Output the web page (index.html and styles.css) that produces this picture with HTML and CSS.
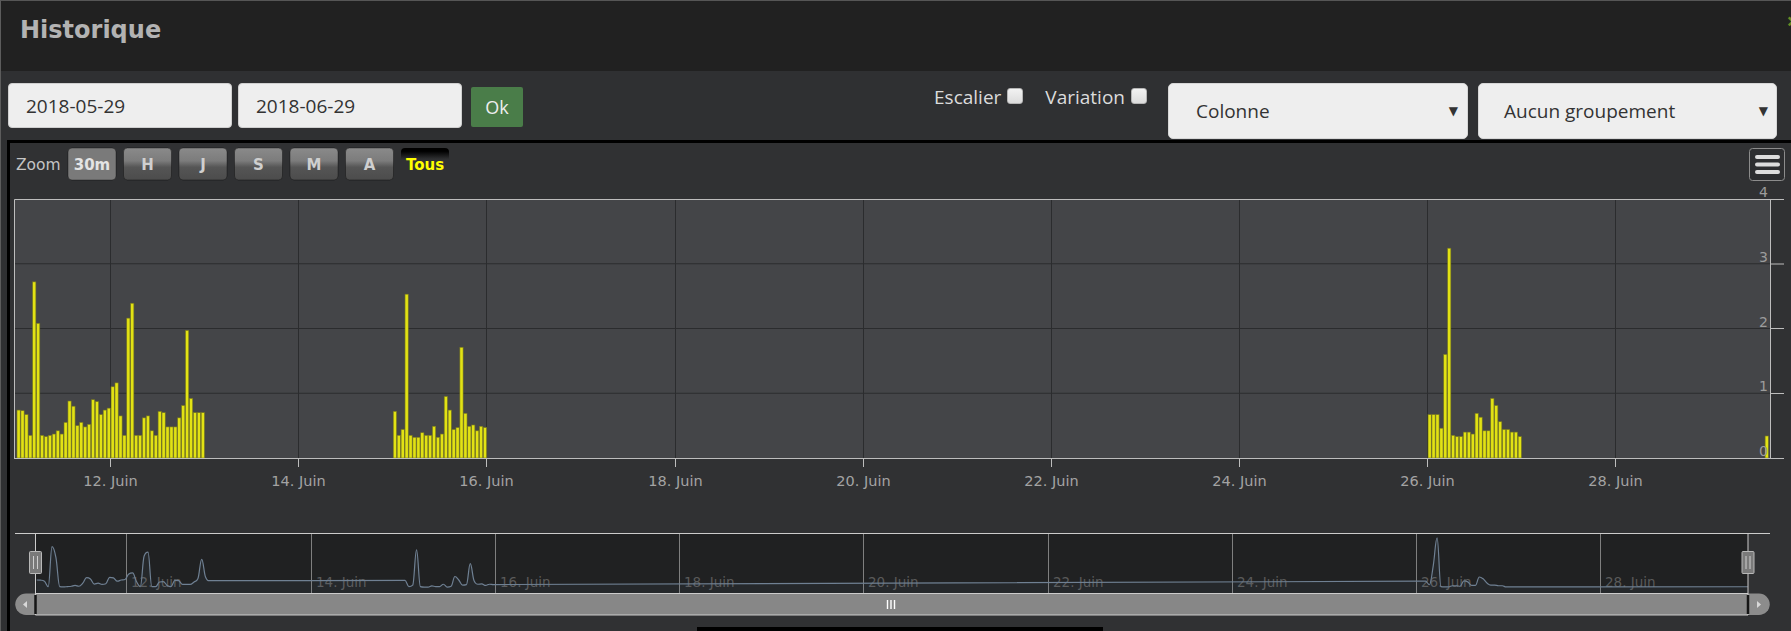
FILE: index.html
```html
<!DOCTYPE html>
<html lang="fr">
<head>
<meta charset="utf-8">
<title>Historique</title>
<link rel="stylesheet" href="styles.css">
</head>
<body>
<div class="modal">
  <div class="modal-header">
    <h4 class="modal-title">Historique</h4>
    <span class="modal-close">×</span>
  </div>
  <div class="toolbar">
    <input class="date-input" type="text" value="2018-05-29">
    <input class="date-input date-input--second" type="text" value="2018-06-29">
    <button class="btn-ok" type="button">Ok</button>
    <div class="options">
      <label class="opt">Escalier<input class="check" type="checkbox"></label>
      <label class="opt opt--variation">Variation<input class="check" type="checkbox"></label>
    </div>
    <div class="select select--type"><span>Colonne</span><span class="caret">▼</span></div>
    <div class="select select--group"><span>Aucun groupement</span><span class="caret">▼</span></div>
  </div>
  <div class="chart-box">
    <svg class="chart" viewBox="10 143 1781 488" xmlns="http://www.w3.org/2000/svg">
      <defs>
        <linearGradient id="btnGrad" x1="0" y1="0" x2="0" y2="1">
          <stop offset="0" stop-color="#8a8a8a"/>
          <stop offset="0.4" stop-color="#7c7c7c"/>
          <stop offset="0.6" stop-color="#555555"/>
          <stop offset="1" stop-color="#4c4c4c"/>
        </linearGradient>
        <linearGradient id="selGrad" x1="0" y1="0" x2="0" y2="1">
          <stop offset="0.1" stop-color="#000000"/>
          <stop offset="0.35" stop-color="#303133"/>
        </linearGradient>
        <clipPath id="plotClip"><rect x="14" y="199" width="1756" height="259"/></clipPath>
        <clipPath id="navClip"><rect x="35.5" y="533" width="1712.5" height="60"/></clipPath>
      </defs>

      <!-- range selector -->
      <text class="rs-label" x="16" y="170">Zoom</text>
      <g class="rs-btn rs-btn--disabled">
        <rect x="68" y="148" width="48" height="32" rx="4"/>
        <text x="92" y="169.5">30m</text>
      </g>
      <g class="rs-btn">
        <rect x="123.5" y="148" width="48" height="32" rx="4"/>
        <text x="147.5" y="169.5">H</text>
      </g>
      <g class="rs-btn">
        <rect x="179" y="148" width="48" height="32" rx="4"/>
        <text x="203" y="169.5">J</text>
      </g>
      <g class="rs-btn">
        <rect x="234.5" y="148" width="48" height="32" rx="4"/>
        <text x="258.5" y="169.5">S</text>
      </g>
      <g class="rs-btn">
        <rect x="290" y="148" width="48" height="32" rx="4"/>
        <text x="314" y="169.5">M</text>
      </g>
      <g class="rs-btn">
        <rect x="345.5" y="148" width="48" height="32" rx="4"/>
        <text x="369.5" y="169.5">A</text>
      </g>
      <g class="rs-btn rs-btn--selected">
        <rect x="401" y="148" width="48" height="32" rx="4"/>
        <text x="425" y="169.5">Tous</text>
      </g>

      <!-- context menu button -->
      <rect class="menu-btn" x="1749.5" y="148.5" width="35" height="32" rx="3"/>
      <path class="menu-lines" d="M1757 157 H1778 M1757 164.5 H1778 M1757 172 H1778"/>

      <!-- plot -->
      <rect class="plot-bg" x="14" y="199" width="1756" height="259"/>
      <path class="grid" d="M14 263.75 H1770 M14 328.5 H1770 M14 393.25 H1770"/>
      <path class="grid" d="M110.5 199 V458 M298.5 199 V458 M486.5 199 V458 M675.5 199 V458 M863.5 199 V458 M1051.5 199 V458 M1239.5 199 V458 M1427.5 199 V458 M1615.5 199 V458"/>
      <g id="bars" clip-path="url(#plotClip)"></g>
      <path class="axis" d="M14.5 458 V199.5 H1770.5 V458.5 H14"/>
      <path class="axis" d="M1770 199.5 H1784 M1770 264 H1784 M1770 328.5 H1784 M1770 393.5 H1784 M1770 458.5 H1784"/>
      <path class="axis" d="M110.5 458 V467 M298.5 458 V467 M486.5 458 V467 M675.5 458 V467 M863.5 458 V467 M1051.5 458 V467 M1239.5 458 V467 M1427.5 458 V467 M1615.5 458 V467"/>
      <g class="x-labels">
        <text x="110.5" y="486">12. Juin</text>
        <text x="298.5" y="486">14. Juin</text>
        <text x="486.5" y="486">16. Juin</text>
        <text x="675.5" y="486">18. Juin</text>
        <text x="863.5" y="486">20. Juin</text>
        <text x="1051.5" y="486">22. Juin</text>
        <text x="1239.5" y="486">24. Juin</text>
        <text x="1427.5" y="486">26. Juin</text>
        <text x="1615.5" y="486">28. Juin</text>
      </g>
      <g class="y-labels">
        <text x="1768" y="197">4</text>
        <text x="1768" y="262">3</text>
        <text x="1768" y="326.5">2</text>
        <text x="1768" y="391">1</text>
        <text x="1768" y="456">0</text>
      </g>

      <!-- navigator -->
      <rect class="nav-bg" x="35.5" y="533" width="1712.5" height="60"/>
      <path class="nav-grid" d="M126.5 533 V593 M311.5 533 V593 M495.5 533 V593 M679.5 533 V593 M863.5 533 V593 M1048.5 533 V593 M1232.5 533 V593 M1416.5 533 V593 M1600.5 533 V593"/>
      <g class="nav-labels">
        <text x="131" y="587">12. Juin</text>
        <text x="316" y="587">14. Juin</text>
        <text x="500" y="587">16. Juin</text>
        <text x="684" y="587">18. Juin</text>
        <text x="868" y="587">20. Juin</text>
        <text x="1053" y="587">22. Juin</text>
        <text x="1237" y="587">24. Juin</text>
        <text x="1421" y="587">26. Juin</text>
        <text x="1605" y="587">28. Juin</text>
      </g>
      <g clip-path="url(#navClip)">
        <path id="nav-area" class="nav-area" d=""/>
        <path id="nav-line" class="nav-line" d=""/>
      </g>

      <!-- scrollbar -->
      <rect class="sb-bar" x="35.5" y="593.5" width="1712.5" height="21.5"/>
      <path class="sb-btn" d="M35.5 593.5 H26 A10.75 10.75 0 0 0 26 615 H35.5 Z"/>
      <path class="sb-btn" d="M1748 593.5 H1759 A10.75 10.75 0 0 1 1759 615 H1748 Z"/>
      <path class="sb-arrow" d="M27 601 L23 604.5 L27 608 Z"/>
      <path class="sb-arrow" d="M1757 601 L1761 604.5 L1757 608 Z"/>
      <path class="sb-rifle" d="M887.5 600 V609 M891 600 V609 M894.5 600 V609"/>
      <path class="nav-outline" d="M15 533.5 H1770 M35.5 593.5 H1748 M35.5 615 H1748"/>
      <path class="nav-outline" d="M35.5 533.5 V615 M1748 533.5 V615"/>
      <path class="sb-mark" d="M35.5 595 V614 M1748 595 V614"/>

      <!-- handles -->
      <rect class="handle" x="29.5" y="551.5" width="12" height="22" rx="1"/>
      <path class="handle-grip" d="M33.5 556 V569 M37.5 556 V569"/>
      <rect class="handle" x="1742" y="551.5" width="12" height="22" rx="1"/>
      <path class="handle-grip" d="M1746 556 V569 M1750 556 V569"/>

      <rect class="bottom-bar" x="697" y="627" width="406" height="4"/>
    </svg>
  </div>
</div>
<script src="script.js"></script>
</body>
</html>
```

FILE: styles.css
```css
html, body {
  margin: 0;
  padding: 0;
  background: #2f3032;
}

body {
  font-family: "Open Sans", "DejaVu Sans", sans-serif;
}

.modal {
  width: 1791px;
  height: 631px;
  box-sizing: border-box;
  border-top: 1px solid #565656;
  border-left: 1px solid #5c5c5c;
  background: #2f3032;
  overflow: hidden;
}

.modal-header {
  position: relative;
  height: 70px;
  background: #212121;
}

.modal-title {
  margin: 0;
  padding-left: 19px;
  font-family: "DejaVu Sans", "Open Sans", sans-serif;
  font-size: 24px;
  font-weight: 700;
  line-height: 58px;
  color: #b3b3b3;
}

.modal-close {
  position: absolute;
  top: 6px;
  right: -8px;
  font-size: 22px;
  font-weight: 700;
  line-height: 26px;
  color: #6d8a24;
}

.toolbar {
  display: flex;
  align-items: flex-start;
  height: 69px;
  box-sizing: border-box;
  padding: 12px 14px 0 7px;
}

.date-input {
  width: 224px;
  height: 45px;
  box-sizing: border-box;
  margin: 0;
  padding: 0 0 0 17px;
  border: 1px solid #cfcfcf;
  border-radius: 4px;
  background: #eeeeee;
  font-family: "Open Sans", sans-serif;
  font-size: 19px;
  color: #333333;
  outline: none;
}

.date-input--second {
  margin-left: 6px;
}

.btn-ok {
  margin: 4px 0 0 9px;
  width: 52px;
  height: 40px;
  padding: 0;
  border: none;
  border-radius: 2px;
  background: #4a7d49;
  font-family: "Open Sans", sans-serif;
  font-size: 18px;
  color: #eeeeee;
}

.options {
  margin-left: auto;
  margin-top: 1px;
  display: flex;
  align-items: flex-start;
  font-size: 19px;
  line-height: 26px;
  color: #dcdcdc;
}

.opt {
  display: flex;
  align-items: flex-start;
}

.opt--variation {
  margin-left: 22px;
}

.check {
  appearance: none;
  -webkit-appearance: none;
  margin: 4px 0 0 6px;
  width: 16px;
  height: 16px;
  box-sizing: border-box;
  border: 1px solid #b5b5b5;
  border-radius: 3px;
  background: linear-gradient(#f2f2f2, #dcdcdc);
}

.select {
  margin-left: 21px;
  width: 300px;
  height: 56px;
  box-sizing: border-box;
  padding: 0 9px 0 27px;
  display: flex;
  align-items: center;
  border: 1px solid #d6d6d6;
  border-radius: 5px;
  background: #eeeeee;
  font-size: 19px;
  color: #333333;
}

.select--group {
  margin-left: 10px;
  width: 299px;
  padding-left: 25px;
  padding-right: 8px;
}

.caret {
  margin-left: auto;
  font-family: "DejaVu Sans", sans-serif;
  font-size: 12px;
  color: #333333;
}

.chart-box {
  margin-left: 6px;
  height: 488px;
  border-top: 3px solid #000000;
  border-left: 3px solid #000000;
  background: #303133;
}

.chart {
  display: block;
  width: 1781px;
  height: 488px;
  font-family: "DejaVu Sans", sans-serif;
}

.rs-label {
  font-size: 15.5px;
  fill: #c4c4c4;
}

.rs-btn rect {
  fill: url(#btnGrad);
  stroke: rgba(0, 0, 0, 0.35);
  stroke-width: 1;
}

.rs-btn text {
  font-size: 15px;
  font-weight: 700;
  fill: #cfcfcf;
  text-anchor: middle;
}

.rs-btn--disabled rect {
  fill: #7a7a7a;
}

.rs-btn--disabled text {
  fill: #e4e4e4;
}

.rs-btn--selected rect {
  fill: url(#selGrad);
  stroke: none;
}

.rs-btn--selected text {
  fill: #ffff00;
}

.menu-btn {
  fill: #2d2e30;
  stroke: #8c8c8c;
  stroke-width: 1;
}

.menu-lines {
  stroke: #dddddd;
  stroke-width: 4;
  stroke-linecap: round;
  fill: none;
}

.plot-bg {
  fill: #444548;
}

.grid {
  stroke: #2b2c2e;
  stroke-width: 1;
  fill: none;
}

.bar {
  fill: #e2e214;
  stroke: #77771f;
  stroke-width: 0.6;
}

.axis {
  stroke: #bdbdbd;
  stroke-width: 1;
  fill: none;
}

.x-labels text {
  font-size: 14.5px;
  fill: #a3a3a3;
  text-anchor: middle;
}

.y-labels text {
  font-size: 14px;
  fill: #9c9c9c;
  text-anchor: end;
}

.nav-bg {
  fill: #202122;
}

.nav-grid {
  stroke: #7f7f7f;
  stroke-width: 1;
  fill: none;
}

.nav-labels text {
  font-size: 13.5px;
  fill: #5a5a5a;
}

.nav-area {
  fill: rgba(119, 152, 191, 0.06);
  stroke: none;
}

.nav-line {
  fill: none;
  stroke: #6f8093;
  stroke-width: 1.2;
}

.sb-bar {
  fill: #878787;
}

.sb-btn {
  fill: #8c8c8c;
}

.sb-arrow {
  fill: #d8d8d8;
}

.sb-rifle {
  stroke: #ffffff;
  stroke-width: 1.4;
  fill: none;
}

.nav-outline {
  stroke: #cccccc;
  stroke-width: 1;
  fill: none;
}

.sb-mark {
  stroke: #151515;
  stroke-width: 2.5;
  fill: none;
}

.handle {
  fill: #7a7a7a;
  stroke: #b8b8b8;
  stroke-width: 1;
}

.handle-grip {
  stroke: #cfcfcf;
  stroke-width: 1;
  fill: none;
}

.bottom-bar {
  fill: #000000;
}
```

FILE: script.js
```js
(function () {
  var NS = 'http://www.w3.org/2000/svg';

  var g1 = [0.74, 0.73, 0.67, 0.35, 2.72, 2.08, 0.35, 0.33, 0.35, 0.37,
            0.42, 0.37, 0.55, 0.88, 0.80, 0.50, 0.55, 0.48, 0.52, 0.90,
            0.87, 0.67, 0.74, 0.77, 1.10, 1.16, 0.65, 0.35, 2.16, 2.39,
            0.35, 0.35, 0.62, 0.65, 0.42, 0.35, 0.72, 0.70, 0.48, 0.48,
            0.48, 0.62, 0.81, 1.97, 0.92, 0.70, 0.70, 0.70];
  var g2 = [0.72, 0.35, 0.44, 2.53, 0.35, 0.32, 0.32, 0.39, 0.35, 0.35,
            0.49, 0.32, 0.37, 0.95, 0.74, 0.44, 0.47, 1.71, 0.69, 0.49,
            0.51, 0.42, 0.49, 0.47];
  var g3 = [0.67, 0.67, 0.67, 0.46, 1.60, 3.24, 0.35, 0.33, 0.33, 0.40,
            0.40, 0.37, 0.69, 0.63, 0.42, 0.42, 0.92, 0.81, 0.56, 0.44,
            0.44, 0.40, 0.40, 0.33];

  var pts = [];
  g1.forEach(function (v, h) { pts.push({ d: 11 + (h + 0.5) / 24, v: v }); });
  g2.forEach(function (v, h) { pts.push({ d: 15 + (h + 0.5) / 24, v: v }); });
  g3.forEach(function (v, h) { pts.push({ d: 26 + (h + 0.5) / 24, v: v }); });
  pts.push({ d: 29 + 14.5 / 24, v: 0.34 });

  function xm(d) { return 110.7 + (d - 12) * 94.07; }
  function ym(v) { return 458 - v * 64.75; }

  var bars = document.getElementById('bars');
  pts.forEach(function (p) {
    var r = document.createElementNS(NS, 'rect');
    var cx = xm(p.d);
    var top = ym(p.v);
    r.setAttribute('x', (cx - 1.6).toFixed(2));
    r.setAttribute('y', top.toFixed(2));
    r.setAttribute('width', '3.2');
    r.setAttribute('height', (458 - top).toFixed(2));
    r.setAttribute('class', 'bar');
    bars.appendChild(r);
  });

  function xn(d) { return 34.8 + (d - 11) * 92.08; }
  function yn(v) { return 593 - (v + 0.03) / 3.56 * 60; }

  var np = pts.map(function (p) { return { x: xn(p.d), y: yn(p.v) }; });
  var sm = 1.5, den = sm + 1;
  var ctrl = np.map(function (p, i) {
    if (i === 0 || i === np.length - 1) {
      return { lx: p.x, ly: p.y, rx: p.x, ry: p.y };
    }
    var a = np[i - 1], b = np[i + 1];
    var lx = (sm * p.x + a.x) / den, ly = (sm * p.y + a.y) / den;
    var rx = (sm * p.x + b.x) / den, ry = (sm * p.y + b.y) / den;
    if (rx !== lx) {
      var c = ((ry - ly) * (rx - p.x)) / (rx - lx) + p.y - ry;
      ly += c; ry += c;
    }
    if (ly > a.y && ly > p.y) { ly = Math.max(a.y, p.y); ry = 2 * p.y - ly; }
    else if (ly < a.y && ly < p.y) { ly = Math.min(a.y, p.y); ry = 2 * p.y - ly; }
    if (ry > b.y && ry > p.y) { ry = Math.max(b.y, p.y); ly = 2 * p.y - ry; }
    else if (ry < b.y && ry < p.y) { ry = Math.min(b.y, p.y); ly = 2 * p.y - ry; }
    return { lx: lx, ly: ly, rx: rx, ry: ry };
  });

  var f = function (n) { return n.toFixed(2); };
  var d = 'M ' + f(np[0].x) + ' ' + f(np[0].y);
  for (var i = 1; i < np.length; i++) {
    d += ' C ' + f(ctrl[i - 1].rx) + ' ' + f(ctrl[i - 1].ry) + ' ' +
         f(ctrl[i].lx) + ' ' + f(ctrl[i].ly) + ' ' + f(np[i].x) + ' ' + f(np[i].y);
  }
  document.getElementById('nav-line').setAttribute('d', d);
  var last = np[np.length - 1], first = np[0];
  document.getElementById('nav-area').setAttribute('d',
    d + ' L ' + f(last.x) + ' 593 L ' + f(first.x) + ' 593 Z');
})();
```
